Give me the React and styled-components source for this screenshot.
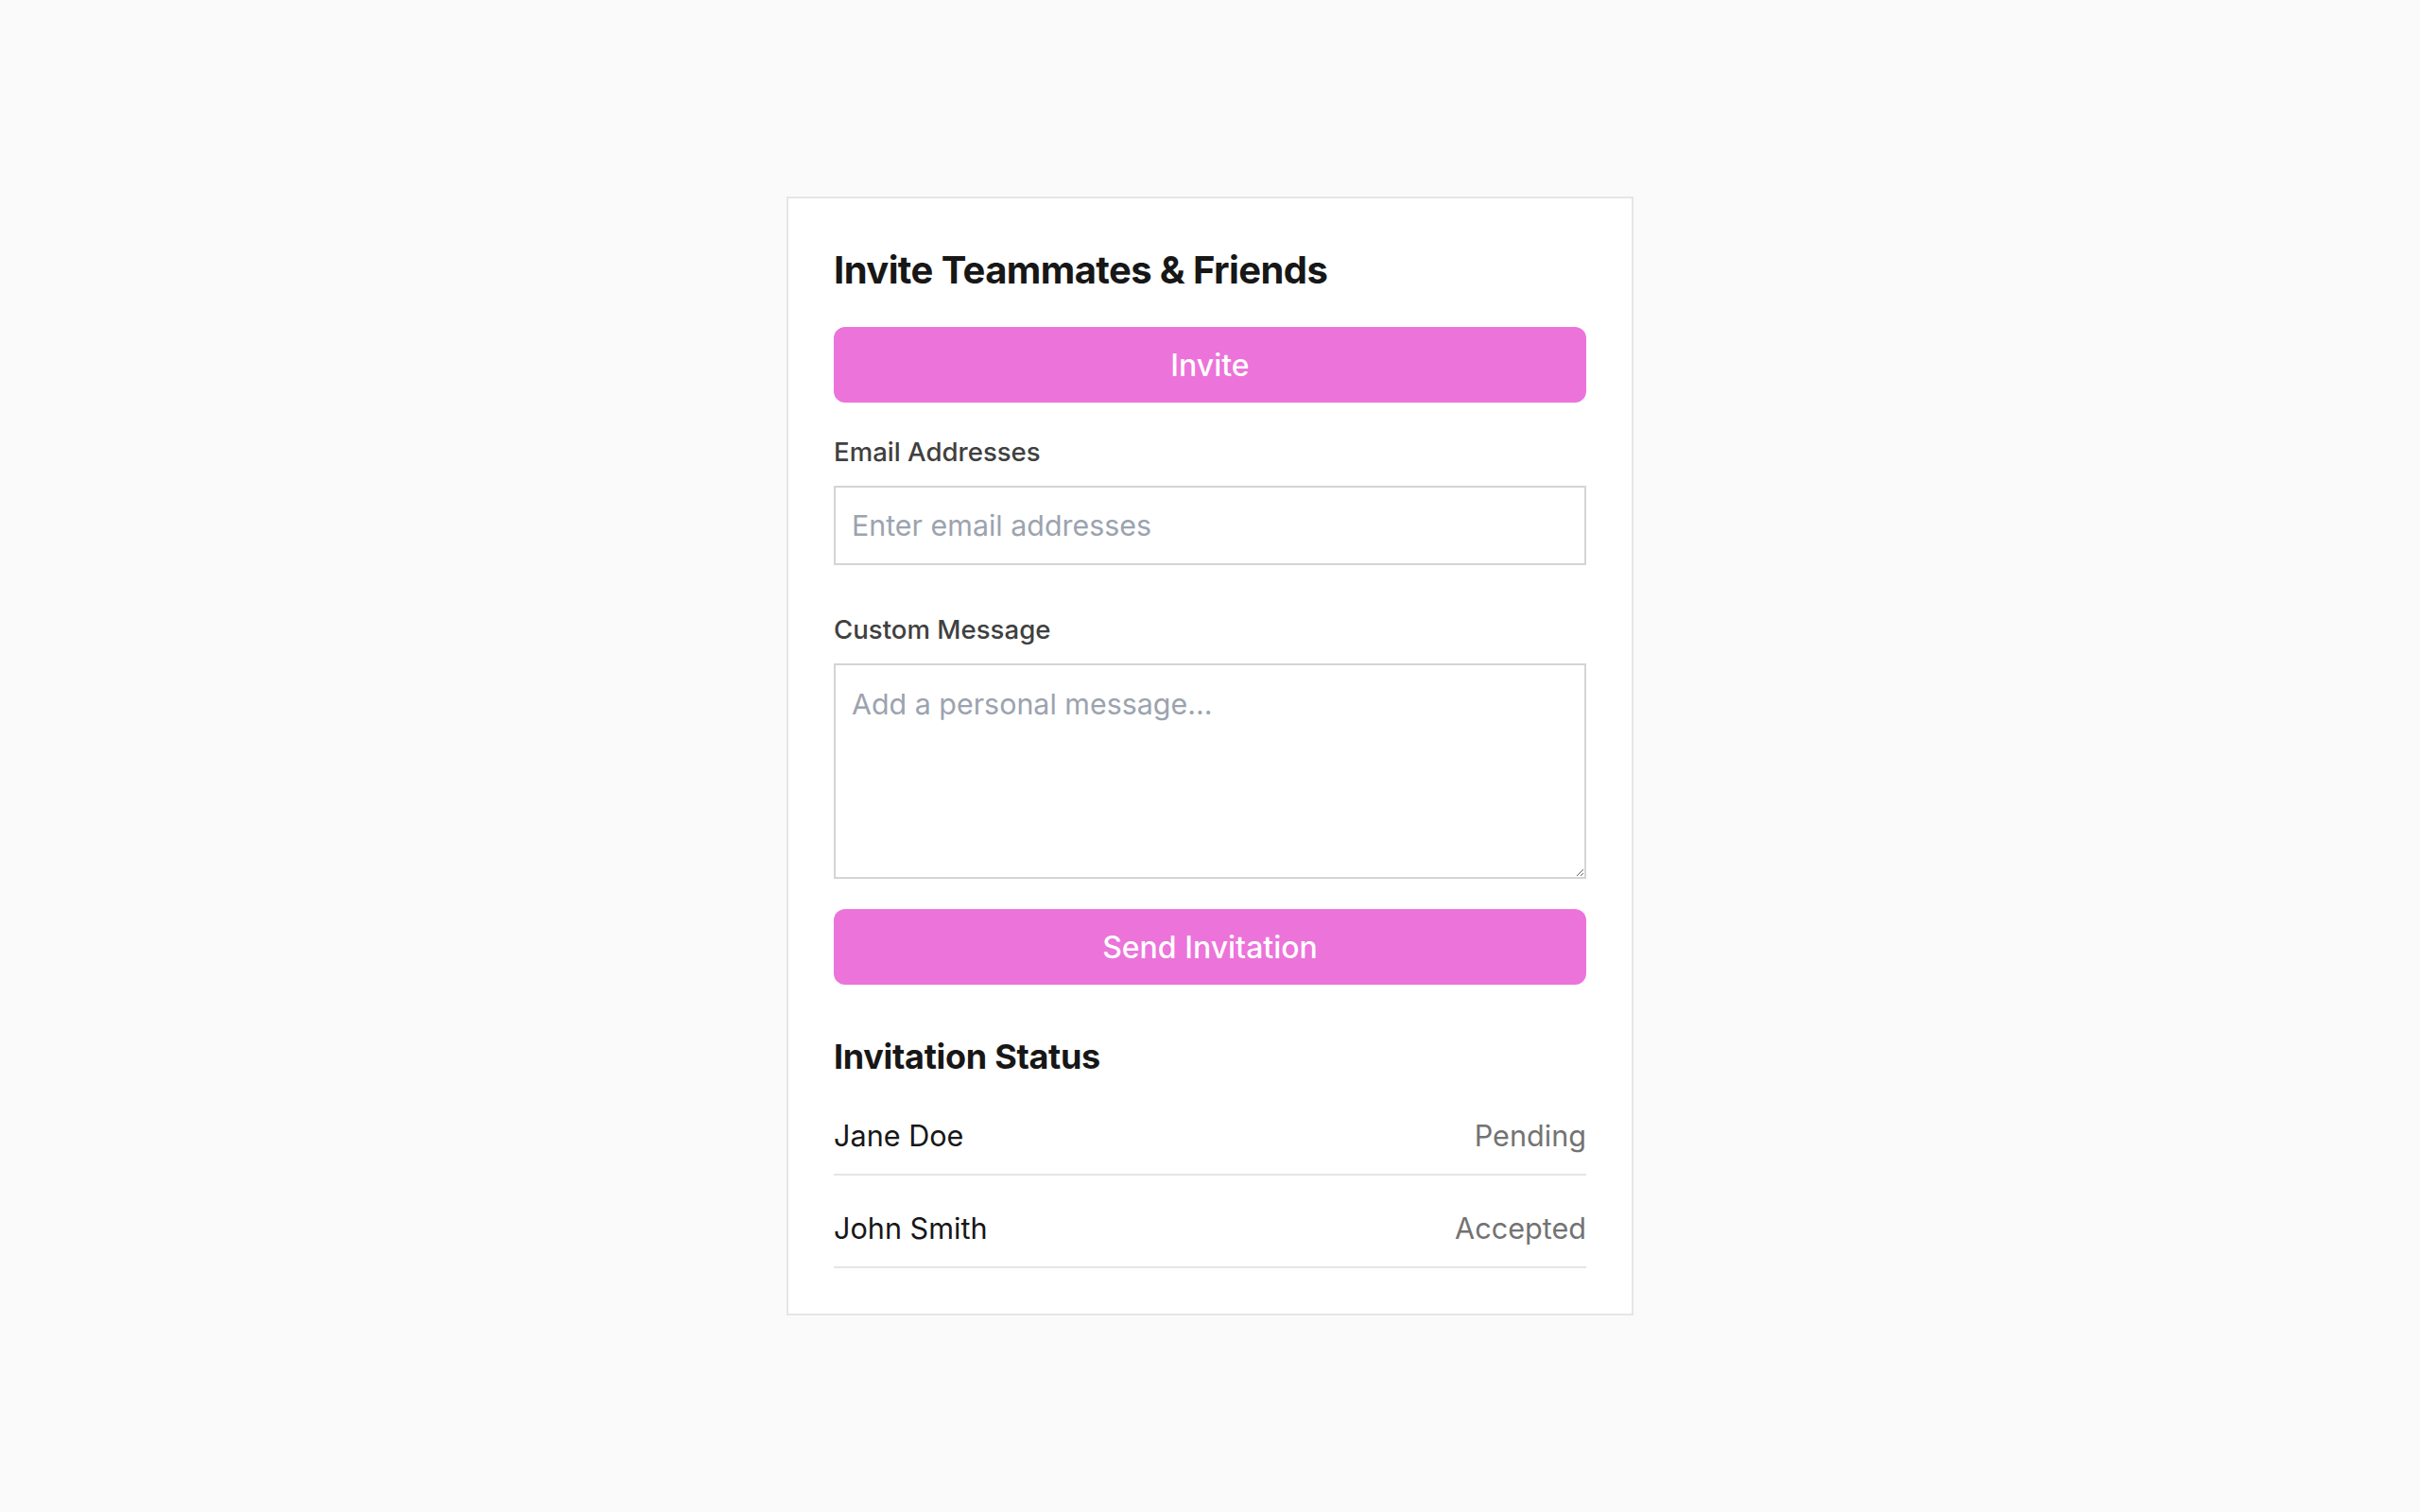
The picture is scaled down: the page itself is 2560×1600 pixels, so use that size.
import React from "react";
import styled, { createGlobalStyle } from "styled-components";

const GlobalStyle = createGlobalStyle`
  * {
    box-sizing: border-box;
  }
  body {
    margin: 0;
    background: #fafafa;
    font-family: Inter, "Noto Sans", "Liberation Sans", sans-serif;
    color: #171717;
  }
`;

const Page = styled.div`
  min-height: 100vh;
  display: flex;
  align-items: center;
  justify-content: center;
`;

const Card = styled.div`
  width: 896px;
  background: #ffffff;
  border: 2px solid #e5e5e5;
  padding: 48px;
  display: flex;
  flex-direction: column;
`;

const Title = styled.h2`
  margin: 0 0 32px;
  font-size: 40px;
  line-height: 56px;
  font-weight: 700;
  color: #171717;
  letter-spacing: -0.6px;
`;

const PinkButton = styled.button`
  width: 100%;
  height: 80px;
  border: none;
  border-radius: 12px;
  background: #ec73da;
  color: #ffffff;
  font-family: inherit;
  font-size: 32px;
  font-weight: 500;
  cursor: pointer;
  margin-bottom: ${(p) => p.$mb || 0}px;
`;

const Field = styled.div`
  display: flex;
  flex-direction: column;
  margin-bottom: ${(p) => p.$mb || 0}px;
`;

const Label = styled.label`
  font-size: 27.6px;
  line-height: 40px;
  font-weight: 500;
  color: #404040;
  margin-bottom: 16px;
`;

const inputBase = `
  width: 100%;
  border: 2px solid #d4d4d4;
  background: #ffffff;
  font-family: Inter, "Noto Sans", "Liberation Sans", sans-serif;
  font-size: 30.4px;
  color: #171717;
  padding: 0 17px;
  outline: none;
  &::placeholder {
    color: #9ca3af;
  }
`;

const TextInput = styled.input`
  ${inputBase}
  height: 84px;
`;

const TextArea = styled.textarea`
  ${inputBase}
  display: block;
  height: 228px;
  padding-top: 21px;
  line-height: 40px;
  resize: vertical;
`;

const SectionTitle = styled.h3`
  margin: 0 0 16px;
  font-size: 36px;
  line-height: 56px;
  font-weight: 700;
  color: #171717;
  letter-spacing: -0.3px;
`;

const StatusList = styled.ul`
  list-style: none;
  margin: 0;
  padding: 0;
  display: flex;
  flex-direction: column;
  gap: 16px;
`;

const StatusRow = styled.li`
  display: flex;
  justify-content: space-between;
  align-items: center;
  padding: 16px 0;
  border-bottom: 2px solid #e5e5e5;
  font-size: 30.6px;
  line-height: 48px;
`;

const Name = styled.span`
  color: #171717;
`;

const Status = styled.span`
  color: #737373;
`;

const invites = [
  { name: "Jane Doe", status: "Pending" },
  { name: "John Smith", status: "Accepted" },
];

export default function App() {
  return (
    <>
      <GlobalStyle />
      <Page>
        <Card>
          <Title>Invite Teammates &amp; Friends</Title>
          <PinkButton $mb={32}>Invite</PinkButton>
          <Field $mb={48}>
            <Label>Email Addresses</Label>
            <TextInput type="text" placeholder="Enter email addresses" />
          </Field>
          <Field $mb={32}>
            <Label>Custom Message</Label>
            <TextArea placeholder="Add a personal message..." />
          </Field>
          <PinkButton $mb={48}>Send Invitation</PinkButton>
          <SectionTitle>Invitation Status</SectionTitle>
          <StatusList>
            {invites.map((i) => (
              <StatusRow key={i.name}>
                <Name>{i.name}</Name>
                <Status>{i.status}</Status>
              </StatusRow>
            ))}
          </StatusList>
        </Card>
      </Page>
    </>
  );
}
